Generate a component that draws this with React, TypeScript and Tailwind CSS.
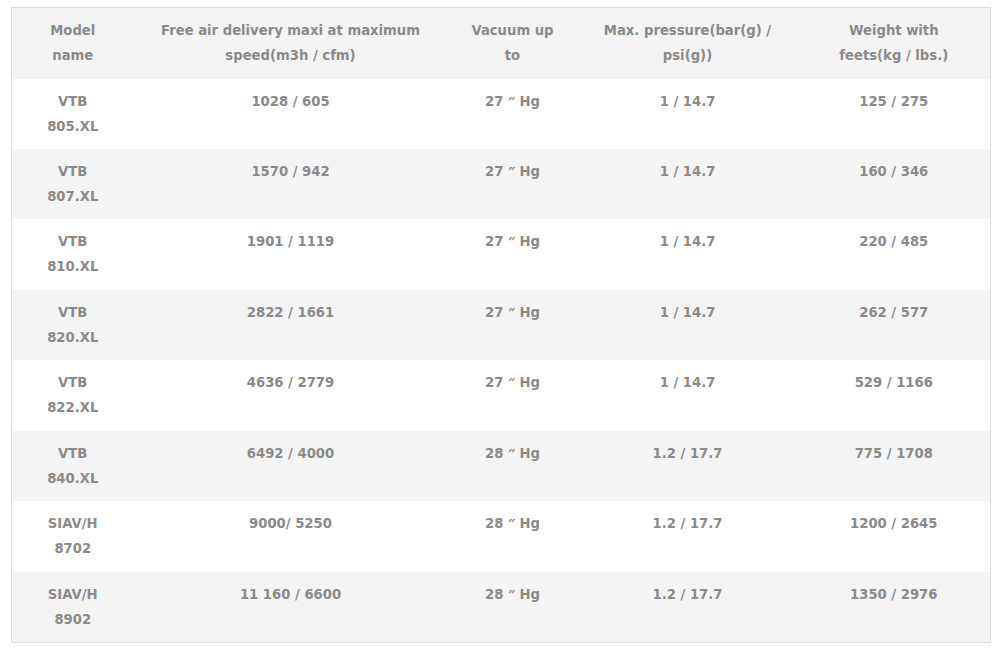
import React from "react";

const rows = [
  ["VTB 805.XL", "1028 / 605", "27", "1 / 14.7", "125 / 275"],
  ["VTB 807.XL", "1570 / 942", "27", "1 / 14.7", "160 / 346"],
  ["VTB 810.XL", "1901 / 1119", "27", "1 / 14.7", "220 / 485"],
  ["VTB 820.XL", "2822 / 1661", "27", "1 / 14.7", "262 / 577"],
  ["VTB 822.XL", "4636 / 2779", "27", "1 / 14.7", "529 / 1166"],
  ["VTB 840.XL", "6492 / 4000", "28", "1.2 / 17.7", "775 / 1708"],
  ["SIAV/H 8702", "9000/ 5250", "28", "1.2 / 17.7", "1200 / 2645"],
  ["SIAV/H 8902", "11 160 / 6600", "28", "1.2 / 17.7", "1350 / 2976"],
];

const heights = ["h-[70px]", "h-[70px]", "h-[71px]", "h-[70px]", "h-[71px]", "h-[70px]", "h-[71px]", "h-[70px]"];

const headers = [
  "Model name",
  "Free air delivery maxi at maximum speed(m3h / cfm)",
  "Vacuum up to",
  "Max. pressure(bar(g) / psi(g))",
  "Weight with feets(kg / lbs.)",
];

const widths = ["w-[122px]", "w-[314px]", "w-[130px]", "w-[220px]", "w-[193px]"];
const pads = ["px-[28px]", "px-[15px]", "px-[18px]", "px-[20px]", "px-[30px]"];

export default function App() {
  return (
    <div className="bg-white w-[998px] h-[651px] pt-[7px] pl-[11px] font-['DejaVu_Sans',sans-serif]">
      <table className="w-[980px] table-fixed border-collapse border border-[#dddddd] text-[13.2px] font-bold text-[#8a8a8a] leading-[25px]">
        <thead>
          <tr className="bg-[#f4f4f4] h-[71px]">
            {headers.map((h, i) => (
              <th key={i} className={`${widths[i]} ${pads[i]} py-[10px] text-center align-top font-bold`}>{h}</th>
            ))}
          </tr>
        </thead>
        <tbody>
          {rows.map((r, ri) => (
            <tr key={ri} className={`${heights[ri]} ${ri % 2 === 0 ? "bg-white" : "bg-[#f4f4f4]"}`}>
              {r.map((c, ci) => (
                <td key={ci} className={`${pads[ci]} py-[10px] text-center align-top`}>
                  {ci === 2 ? (
                    <>
                      {c} <span className="font-['Noto_Sans',sans-serif]">″</span> Hg
                    </>
                  ) : (
                    c
                  )}
                </td>
              ))}
            </tr>
          ))}
        </tbody>
      </table>
    </div>
  );
}
